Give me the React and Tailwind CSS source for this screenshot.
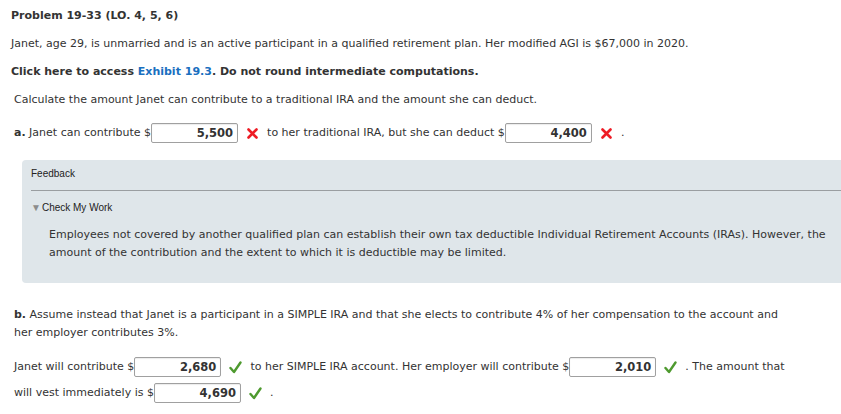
import React from "react";

const body = "font-['DejaVu_Sans',Verdana,sans-serif] text-[11px] text-[#333]";

function Box({ value }) {
  return (
    <span className="inline-block align-middle w-[87px] h-[20px] leading-[18px] border border-[#a0a0a0] rounded-[2px] bg-white text-right pr-[4px] font-bold text-[11.5px] text-[#333] shadow-[inset_0_1px_1px_rgba(0,0,0,0.08)]">
      {value}
    </span>
  );
}

function Wrong() {
  return (
    <svg className="inline-block align-middle mx-[9px]" width="11" height="11" viewBox="0 0 11 11">
      <path d="M1.5 1.5 L9.5 9.5 M9.5 1.5 L1.5 9.5" stroke="#ee1c25" strokeWidth="2.6" strokeLinecap="round" />
    </svg>
  );
}

function Right() {
  return (
    <svg className="inline-block align-middle mx-[8px]" width="13" height="13" viewBox="0 0 13 13">
      <path d="M1.5 7 L5 11 L11.5 1.5" fill="none" stroke="#4e9a2f" strokeWidth="2.4" strokeLinecap="round" strokeLinejoin="round" />
    </svg>
  );
}

export default function App() {
  return (
    <div className={`${body} w-[841px] h-[414px] bg-white overflow-hidden pt-[8px]`}>
      <div className="pl-[11px] font-bold leading-[16px]">Problem 19-33 (LO. 4, 5, 6)</div>

      <p className="pl-[11px] mt-[12px] leading-[16px]">
        Janet, age 29, is unmarried and is an active participant in a qualified retirement plan. Her modified AGI is $67,000 in 2020.
      </p>

      <p className="pl-[11px] mt-[12px] leading-[16px] font-bold">
        Click here to access <span className="text-[#1a6fbf]">Exhibit 19.3</span>. Do not round intermediate computations.
      </p>

      <p className="pl-[14px] mt-[12px] leading-[16px]">
        Calculate the amount Janet can contribute to a traditional IRA and the amount she can deduct.
      </p>

      <div className="pl-[14px] mt-[14px] leading-[22px]">
        <span className="font-bold">a.</span> Janet can contribute $<Box value="5,500" />
        <Wrong />
        to her traditional IRA, but she can deduct $<Box value="4,400" />
        <Wrong />.
      </div>

      <div className="ml-[22px] mt-[16px] h-[123px] bg-[#dfe6ea] rounded-l-[4px] pl-[9px]">
        <div className="font-['Liberation_Sans',Arial,sans-serif] text-[10px] text-[#222] pt-[8px] leading-[12px]">Feedback</div>
        <div className="mt-[10px] border-t border-[#9a9ea1]" />
        <div className="mt-[11px] flex items-center gap-[1px] font-['Liberation_Sans',Arial,sans-serif] text-[10px] text-[#222] leading-[12px]">
          <span className="text-[#8c8c8c] text-[10px]">▼</span>
          <span>Check My Work</span>
        </div>
        <p className="mt-[12px] pl-[18px] pr-0 leading-[18px]">
          Employees not covered by another qualified plan can establish their own tax deductible Individual Retirement Accounts (IRAs). However, the amount of the contribution and the extent to which it is deductible may be limited.
        </p>
      </div>

      <p className="pl-[14px] pr-[50px] mt-[23px] leading-[18px]">
        <span className="font-bold">b.</span> Assume instead that Janet is a participant in a SIMPLE IRA and that she elects to contribute 4% of her compensation to the account and her employer contributes 3%.
      </p>

      <div className="pl-[14px] pr-[50px] mt-[12px] leading-[26px]">
        Janet will contribute $<Box value="2,680" />
        <Right />
        to her SIMPLE IRA account. Her employer will contribute $<Box value="2,010" />
        <Right />. The amount that will vest immediately is $<Box value="4,690" />
        <Right />.
      </div>
    </div>
  );
}
